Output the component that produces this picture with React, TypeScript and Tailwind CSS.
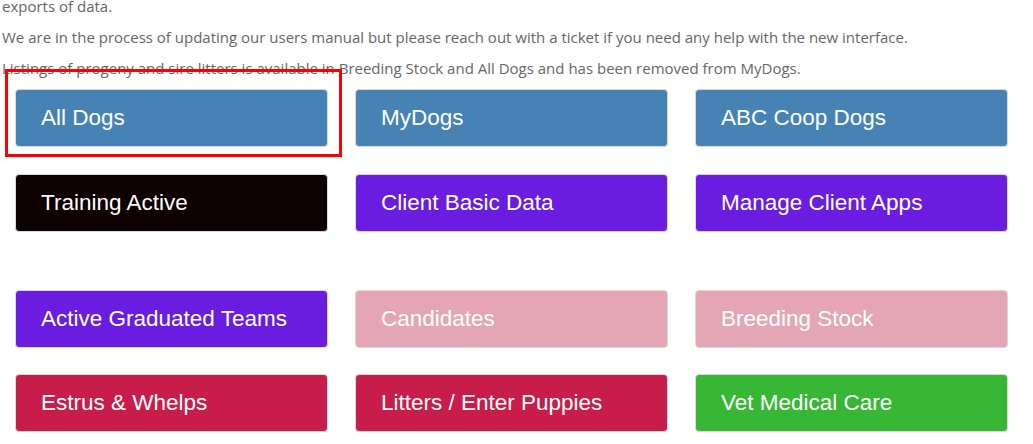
const tiles = [
  [
    { label: 'All Dogs', color: 'bg-[#4682b4]' },
    { label: 'MyDogs', color: 'bg-[#4682b4]' },
    { label: 'ABC Coop Dogs', color: 'bg-[#4682b4]' },
  ],
  [
    { label: 'Training Active', color: 'bg-[#0d0101]' },
    { label: 'Client Basic Data', color: 'bg-[#6a1de0]' },
    { label: 'Manage Client Apps', color: 'bg-[#6a1de0]' },
  ],
  [
    { label: 'Active Graduated Teams', color: 'bg-[#6a1de0]' },
    { label: 'Candidates', color: 'bg-[#e4a6b4]' },
    { label: 'Breeding Stock', color: 'bg-[#e4a6b4]' },
  ],
  [
    { label: 'Estrus & Whelps', color: 'bg-[#c81c4a]' },
    { label: 'Litters / Enter Puppies', color: 'bg-[#c81c4a]' },
    { label: 'Vet Medical Care', color: 'bg-[#37b733]' },
  ],
];

function Tile({ label, color }: { label: string; color: string }) {
  return (
    <a
      href="#"
      className={`ml-[15px] flex h-[57.5px] w-[313px] items-center rounded-[4px] border border-[#d9d9d9] pl-[25px] text-[22.5px] text-white ${color}`}
      style={{ fontFamily: '"Liberation Sans", Arial, sans-serif' }}
    >
      {label}
    </a>
  );
}

function Row({ items }: { items: { label: string; color: string }[] }) {
  return (
    <div className="grid grid-cols-[340px_340px_340px]">
      {items.map((t) => (
        <Tile key={t.label} {...t} />
      ))}
    </div>
  );
}

export default function App() {
  return (
    <div className="relative h-[444px] w-[1033px] overflow-hidden bg-white">
      <div
        className="mt-[-4px] pl-[2px] text-[15px] leading-[21px] text-[#666666]"
        style={{ fontFamily: '"Open Sans", sans-serif' }}
      >
        <p className="mb-[10px]">exports of data.</p>
        <p className="mb-[10px]">
          We are in the process of updating our users manual but please reach out with a ticket if you need any help with the new interface.
        </p>
        <p className="mb-[10px]">
          Listings of progeny and sire litters is available in Breeding Stock and All Dogs and has been removed from MyDogs.
        </p>
      </div>

      <div className="flex flex-col">
        <Row items={tiles[0]} />
        <div className="mt-[27.5px]">
          <Row items={tiles[1]} />
        </div>
        <div className="mt-[58.5px]">
          <Row items={tiles[2]} />
        </div>
        <div className="mt-[26.5px]">
          <Row items={tiles[3]} />
        </div>
      </div>

      {/* highlight annotation */}
      <div className="pointer-events-none absolute left-[5px] top-[69px] h-[88px] w-[337px] border-[3px] border-[#ff0000]" />
    </div>
  );
}
